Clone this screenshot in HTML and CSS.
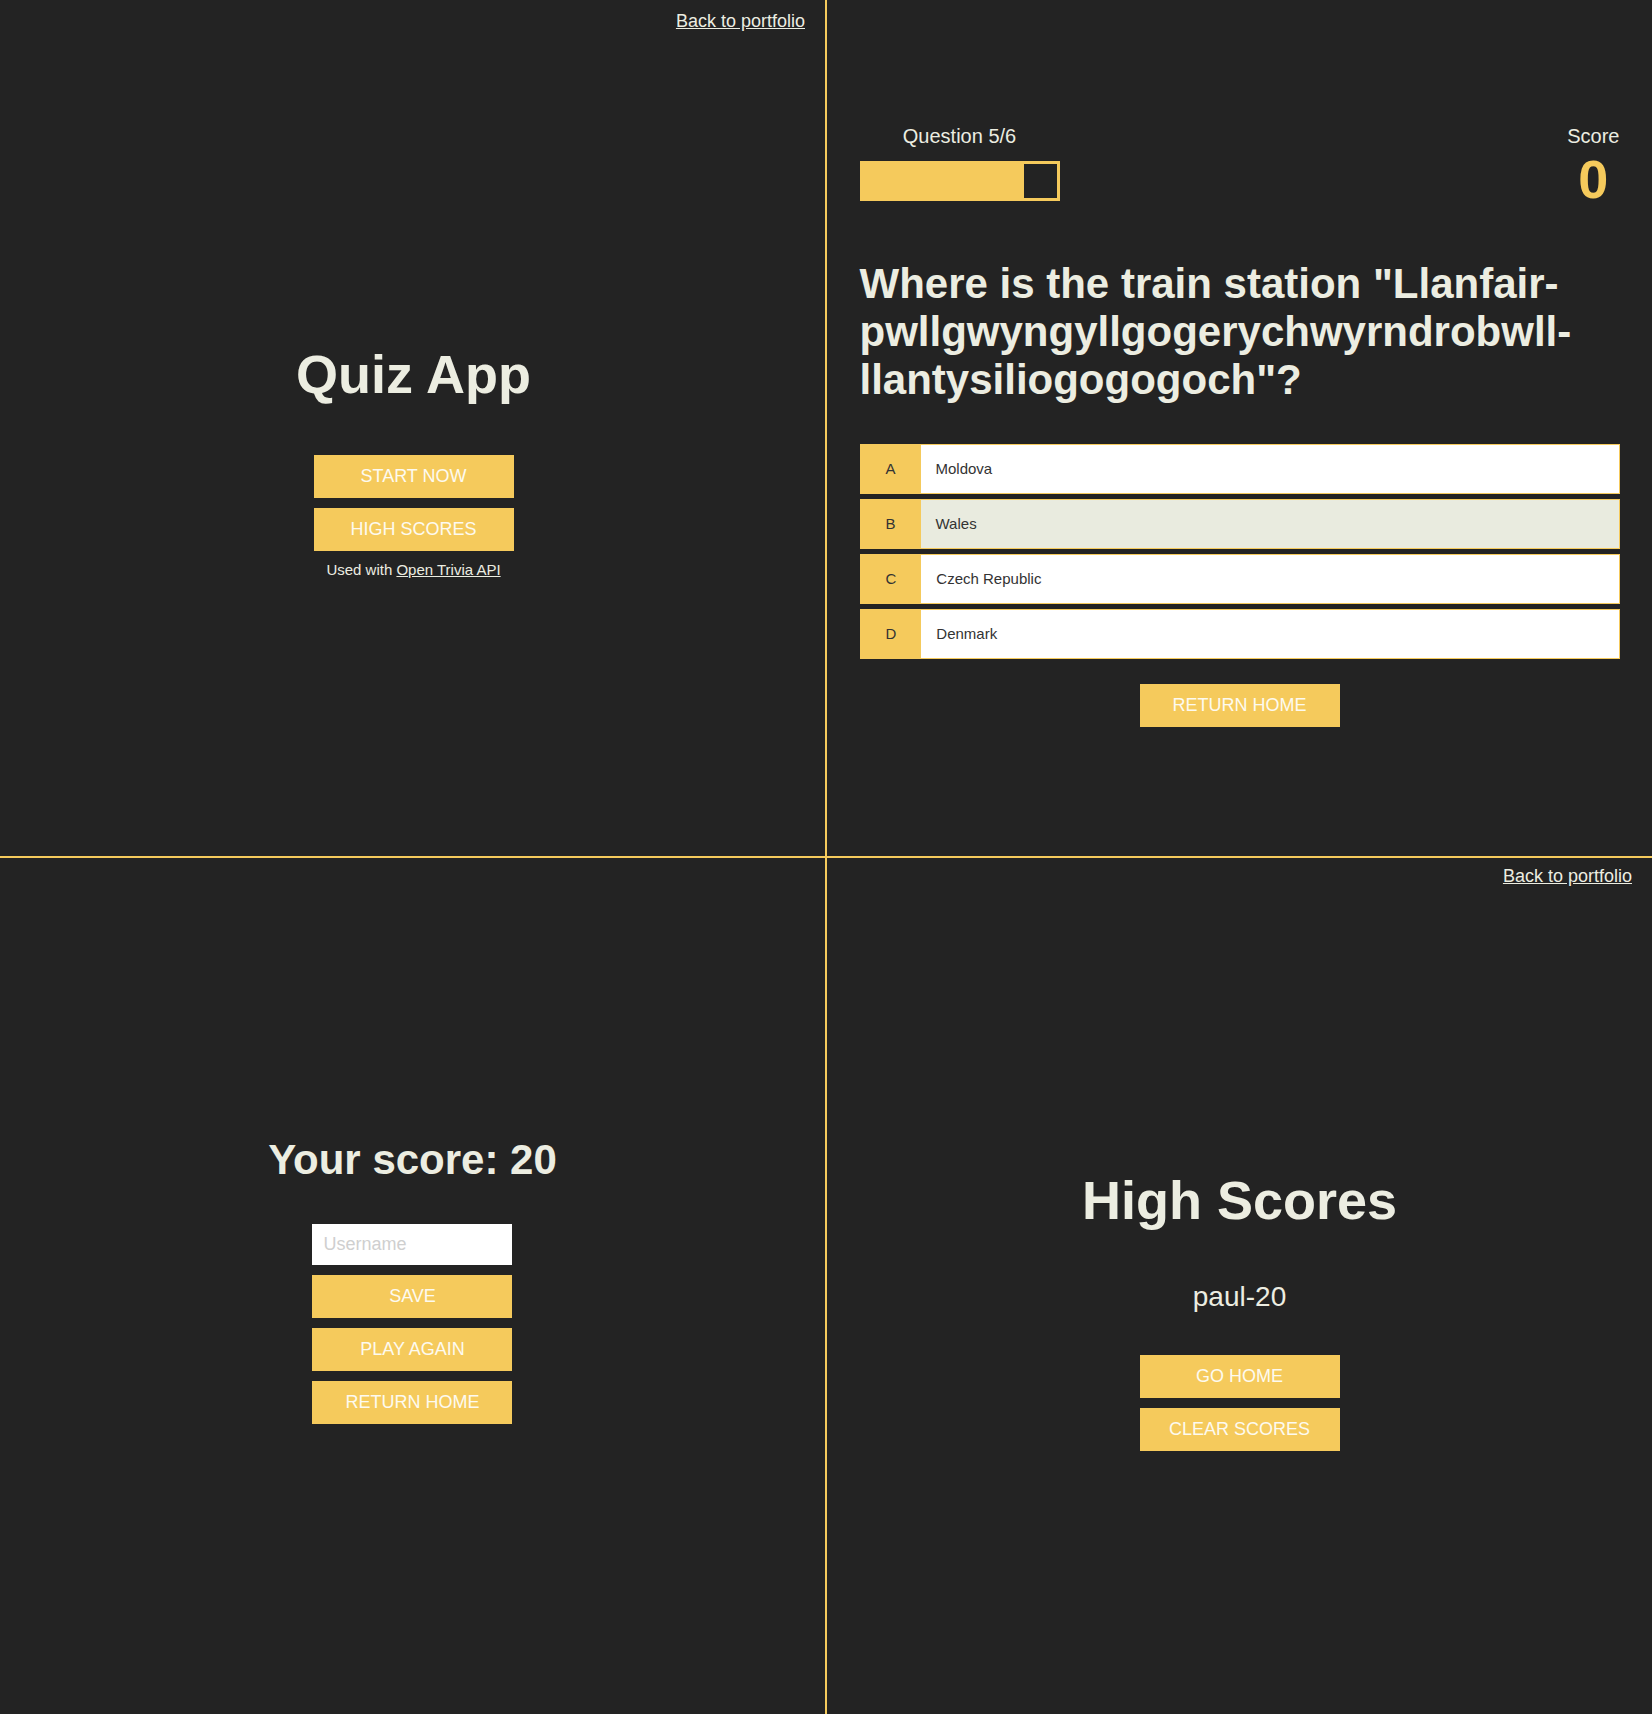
FILE: index.html
```html
<!DOCTYPE html>
<html lang="en">
<head>
<meta charset="utf-8">
<title>Quiz App</title>
<link rel="stylesheet" href="styles.css">
</head>
<body>
<main class="board">
  <section class="pane pane--home">
    <a class="back-link back-link--home" href="#">Back to portfolio</a>
    <div class="stack">
      <h1 class="title">Quiz App</h1>
      <a class="btn" href="#">Start Now</a>
      <a class="btn" href="#">High Scores</a>
      <p class="credit">Used with <a href="#">Open Trivia API</a></p>
    </div>
  </section>

  <section class="pane pane--game">
    <div class="game">
      <div class="hud">
        <div class="hud-item">
          <p class="hud-prefix">Question 5/6</p>
          <div class="progress"><div class="progress-fill" style="width:83.333%"></div></div>
        </div>
        <div class="hud-item">
          <p class="hud-prefix">Score</p>
          <h1 class="hud-score">0</h1>
        </div>
      </div>
      <h2 class="question">Where is the train station "Llanfair&shy;pwllgwyngyllgogerychwyrndrobwll&shy;llantysiliogogogoch"?</h2>
      <div class="choice"><p class="choice-prefix">A</p><p class="choice-text">Moldova</p></div>
      <div class="choice choice--hover"><p class="choice-prefix">B</p><p class="choice-text">Wales</p></div>
      <div class="choice"><p class="choice-prefix">C</p><p class="choice-text">Czech Republic</p></div>
      <div class="choice"><p class="choice-prefix">D</p><p class="choice-text">Denmark</p></div>
      <a class="btn btn--spaced" href="#">Return Home</a>
    </div>
  </section>

  <section class="pane pane--end">
    <div class="stack">
      <h2 class="final-score">Your score: 20</h2>
      <input class="username" type="text" placeholder="Username">
      <a class="btn" href="#">Save</a>
      <a class="btn" href="#">Play Again</a>
      <a class="btn" href="#">Return Home</a>
    </div>
  </section>

  <section class="pane pane--scores">
    <a class="back-link back-link--scores" href="#">Back to portfolio</a>
    <div class="stack">
      <h1 class="title title--scores">High Scores</h1>
      <ul class="score-list">
        <li class="score-item">paul-20</li>
      </ul>
      <a class="btn" href="#">Go Home</a>
      <a class="btn" href="#">Clear Scores</a>
    </div>
  </section>
</main>
</body>
</html>
```

FILE: styles.css
```css
* {
  box-sizing: border-box;
  margin: 0;
  padding: 0;
}

body {
  margin: 0;
  background: #232323;
  font-family: "Liberation Sans", Arial, Helvetica, sans-serif;
  color: #ecede1;
}

.board {
  display: grid;
  grid-template-columns: 825px 825px;
  grid-template-rows: 856px 856px;
  gap: 2px;
  width: 1652px;
  height: 1714px;
  background: #f5ca5c;
}

.pane {
  position: relative;
  background: #232323;
  display: flex;
  flex-direction: column;
  align-items: center;
}

.pane--home { padding-top: 343px; padding-left: 2px; }
.pane--game { padding-top: 125px; }
.pane--end { padding-top: 278px; }
.pane--scores { padding-top: 311px; }

.back-link {
  position: absolute;
  right: 20px;
  font-size: 18px;
  color: #ecede1;
  text-decoration: underline;
}

.back-link--home { top: 11px; }
.back-link--scores { top: 8px; }

.stack {
  display: flex;
  flex-direction: column;
  align-items: center;
}

.title {
  font-size: 54px;
  font-weight: 700;
  color: #ecede1;
  margin-bottom: 50px;
}

.btn {
  display: block;
  width: 200px;
  padding: 10px 0;
  margin-bottom: 10px;
  border: 1px solid #f5ca5c;
  background: #f5ca5c;
  color: #fdfaf0;
  font-size: 18px;
  text-align: center;
  text-transform: uppercase;
  text-decoration: none;
}

.credit {
  font-size: 15px;
  color: #ecede1;
}

.credit a {
  color: #ecede1;
  text-decoration: underline;
}

/* game */
.game {
  width: 760px;
  display: flex;
  flex-direction: column;
}

.hud {
  display: flex;
  justify-content: space-between;
  margin-bottom: 50px;
}

.hud-item {
  display: flex;
  flex-direction: column;
  align-items: center;
}

.hud-prefix {
  font-size: 20px;
  text-align: center;
  color: #ecede1;
}

.progress {
  width: 200px;
  height: 40px;
  border: 3px solid #f5ca5c;
  margin-top: 13px;
}

.progress-fill {
  height: 100%;
  background: #f5ca5c;
}

.hud-score {
  font-size: 54px;
  font-weight: 700;
  color: #f5ca5c;
  text-align: center;
}

.question {
  font-size: 42px;
  font-weight: 700;
  color: #ecede1;
  margin-bottom: 40px;
}

.choice {
  display: flex;
  width: 100%;
  margin-bottom: 5px;
  border: 1px solid #f5ca5c;
  background: #ffffff;
  font-size: 15px;
  line-height: 18px;
}

.choice--hover {
  background: #e9ebdf;
}

.choice-prefix {
  padding: 15px 25px;
  background: #f5ca5c;
  color: #333333;
}

.choice-text {
  padding: 15px;
  flex: 1;
  color: #333333;
}

.btn--spaced {
  margin-top: 20px;
  align-self: center;
}

/* end */
.final-score {
  font-size: 42px;
  font-weight: 700;
  color: #ecede1;
  margin-bottom: 40px;
}

.username {
  display: block;
  width: 200px;
  padding: 10px 11px;
  margin-bottom: 10px;
  border: none;
  outline: none;
  background: #ffffff;
  font-family: "Liberation Sans", Arial, Helvetica, sans-serif;
  font-size: 18px;
  color: #333333;
}

.username::placeholder {
  color: #cfcfcf;
}

/* high scores */
.score-list {
  list-style: none;
  margin-bottom: 37px;
}

.score-item {
  font-size: 28px;
  color: #ecede1;
  margin-bottom: 5px;
  text-align: center;
}
```
